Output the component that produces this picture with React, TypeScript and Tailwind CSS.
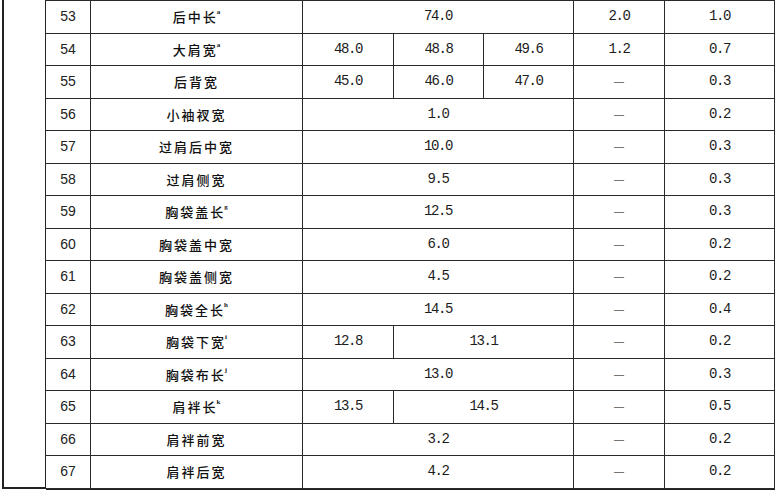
import React from 'react';

type Cell = { text: string; span?: 1 | 2 | 3 };

type Row = {
  no: number;
  name: string;
  mark?: string;
  values: Cell[];
  tol: string;
  last: string;
};

const rows: Row[] = [
  { no: 53, name: '后中长', mark: 'a', values: [{ text: '74.0', span: 3 }], tol: '2.0', last: '1.0' },
  { no: 54, name: '大肩宽', mark: 'a', values: [{ text: '48.0' }, { text: '48.8' }, { text: '49.6' }], tol: '1.2', last: '0.7' },
  { no: 55, name: '后背宽', values: [{ text: '45.0' }, { text: '46.0' }, { text: '47.0' }], tol: '—', last: '0.3' },
  { no: 56, name: '小袖衩宽', values: [{ text: '1.0', span: 3 }], tol: '—', last: '0.2' },
  { no: 57, name: '过肩后中宽', values: [{ text: '10.0', span: 3 }], tol: '—', last: '0.3' },
  { no: 58, name: '过肩侧宽', values: [{ text: '9.5', span: 3 }], tol: '—', last: '0.3' },
  { no: 59, name: '胸袋盖长', mark: 'g', values: [{ text: '12.5', span: 3 }], tol: '—', last: '0.3' },
  { no: 60, name: '胸袋盖中宽', values: [{ text: '6.0', span: 3 }], tol: '—', last: '0.2' },
  { no: 61, name: '胸袋盖侧宽', values: [{ text: '4.5', span: 3 }], tol: '—', last: '0.2' },
  { no: 62, name: '胸袋全长', mark: 'h', values: [{ text: '14.5', span: 3 }], tol: '—', last: '0.4' },
  { no: 63, name: '胸袋下宽', mark: 'i', values: [{ text: '12.8' }, { text: '13.1', span: 2 }], tol: '—', last: '0.2' },
  { no: 64, name: '胸袋布长', mark: 'j', values: [{ text: '13.0', span: 3 }], tol: '—', last: '0.3' },
  { no: 65, name: '肩袢长', mark: 'k', values: [{ text: '13.5' }, { text: '14.5', span: 2 }], tol: '—', last: '0.5' },
  { no: 66, name: '肩袢前宽', values: [{ text: '3.2', span: 3 }], tol: '—', last: '0.2' },
  { no: 67, name: '肩袢后宽', values: [{ text: '4.2', span: 3 }], tol: '—', last: '0.2' },
];

const cell = 'h-[32.5px] flex items-center justify-center border-r border-b border-[#2a2a2a]';
const num = "font-['Liberation_Mono',monospace] text-[14px] tracking-[-1.4px] text-[#1c1c1c]";

const spanClass = (span?: number) =>
  span === 3 ? 'col-span-3' : span === 2 ? 'col-span-2' : 'col-span-1';

const App: React.FC = () => {
  return (
    <div className="w-[776px] h-[490px] bg-white overflow-hidden">
      <div className="flex">
        {/* blank margin column */}
        <div className="ml-[2px] w-[44px] h-[489px] border-l-2 border-r border-b-2 border-[#222] flex-none" />

        <div className="grid grid-cols-[45px_212px_91px_90px_90px_91px_110px] border-t border-[#2a2a2a] border-b border-b-[#222]">
          {rows.map((r) => (
            <React.Fragment key={r.no}>
              <div className={`${cell} font-['Liberation_Sans',sans-serif] text-[14px] text-[#222]`}>{r.no}</div>
              <div className={`${cell} font-['Noto_Sans_CJK_SC',sans-serif] font-medium text-[13px] tracking-[2px] text-[#111]`}>
                <span>{r.name}</span>
                {r.mark && (
                  <span className="self-start mt-[8px] -ml-[1px] font-['Liberation_Serif',serif] font-bold text-[7px] leading-none tracking-normal text-[#222]">
                    {r.mark}
                  </span>
                )}
              </div>
              {r.values.map((v, i) => (
                <div key={i} className={`${cell} ${spanClass(v.span)} ${num}`}>
                  {v.text}
                </div>
              ))}
              <div className={`${cell} ${r.tol === '—' ? 'text-[10px] text-[#555] font-["Liberation_Sans",sans-serif]' : num}`}>
                {r.tol}
              </div>
              <div className={`${cell} ${num}`}>{r.last}</div>
            </React.Fragment>
          ))}
        </div>
      </div>
    </div>
  );
};

export default App;
